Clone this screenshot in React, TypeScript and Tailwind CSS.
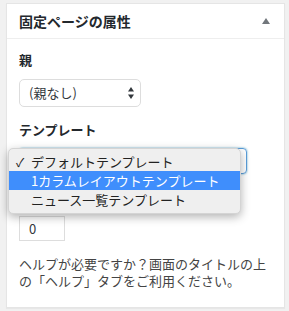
import React from "react";

const templates = [
  { label: "デフォルトテンプレート", checked: true },
  { label: "1カラムレイアウトテンプレート", active: true },
  { label: "ニュース一覧テンプレート" },
];

function UpDown() {
  return (
    <svg width="6" height="12" viewBox="0 0 6 12" className="text-[#32373c]">
      <path d="M3 0 L6 4.5 H0 Z" fill="currentColor" />
      <path d="M3 12 L6 7.5 H0 Z" fill="currentColor" />
    </svg>
  );
}

export default function App() {
  return (
    <div
      className="min-h-screen bg-[#f1f1f1] pt-[3px] pl-[6px] text-[#23282d]"
      style={{ fontFamily: '"Noto Sans CJK JP", "Liberation Sans", sans-serif' }}
    >
      <div className="w-[279px] bg-white border border-[#e5e5e5] shadow-[0_1px_1px_rgba(0,0,0,0.04)]">
        <div className="h-[35px] flex items-center justify-between pl-[12px] pr-[14px] border-b border-[#eee]">
          <h2 className="text-[14px] font-bold leading-none">固定ページの属性</h2>
          <svg width="8" height="6" viewBox="0 0 8 6">
            <path d="M4 0 L8 6 H0 Z" fill="#72777c" />
          </svg>
        </div>

        <div className="px-[12px] pt-[12px] pb-[18px]">
          <p className="text-[13px] font-bold leading-[18px]">親</p>
          <div className="mt-[10px] w-[122px] h-[28px] border border-[#ddd] rounded-[5px] flex items-center justify-between pl-[9px] pr-[6px] text-[13px] text-[#32373c]">
            <span>(親なし)</span>
            <UpDown />
          </div>

          <p className="mt-[14px] text-[13px] font-bold leading-[18px]">テンプレート</p>
          <div className="relative mt-[9px] w-[228px] h-[26px] border border-[#5b9dd9] rounded-[4px] shadow-[0_0_2px_rgba(30,140,190,0.8)] flex items-center justify-end pr-[6px]">
            <UpDown />
            <div className="absolute left-[-12px] top-[-1px] w-[233px] bg-[#efefef] border border-[#d4d4d4] rounded-[5px] shadow-[0_3px_10px_rgba(0,0,0,0.3)] pt-[3px] pb-[4px] z-10">
              {templates.map((t) => (
                <div
                  key={t.label}
                  className={`h-[19px] flex items-center text-[13px] leading-none ${
                    t.active ? "bg-[#3f8efc] text-white" : "text-[#222]"
                  }`}
                >
                  <span className="w-[22px] pl-[7px] text-[12px]">{t.checked ? "✓" : ""}</span>
                  <span>{t.label}</span>
                </div>
              ))}
            </div>
          </div>

          {/* label sits under the open menu */}
          <p className="invisible mt-[12px] text-[13px] font-bold leading-[18px]">並び順</p>
          <div className="mt-[12px] w-[46px] h-[25px] border border-[#ddd] flex items-center pl-[9px] text-[13px] text-[#32373c]">
            0
          </div>

          <p className="mt-[14px] text-[13px] leading-[17px] text-[#444]">
            ヘルプが必要ですか？画面のタイトルの上の「ヘルプ」タブをご利用ください。
          </p>
        </div>
      </div>
    </div>
  );
}
